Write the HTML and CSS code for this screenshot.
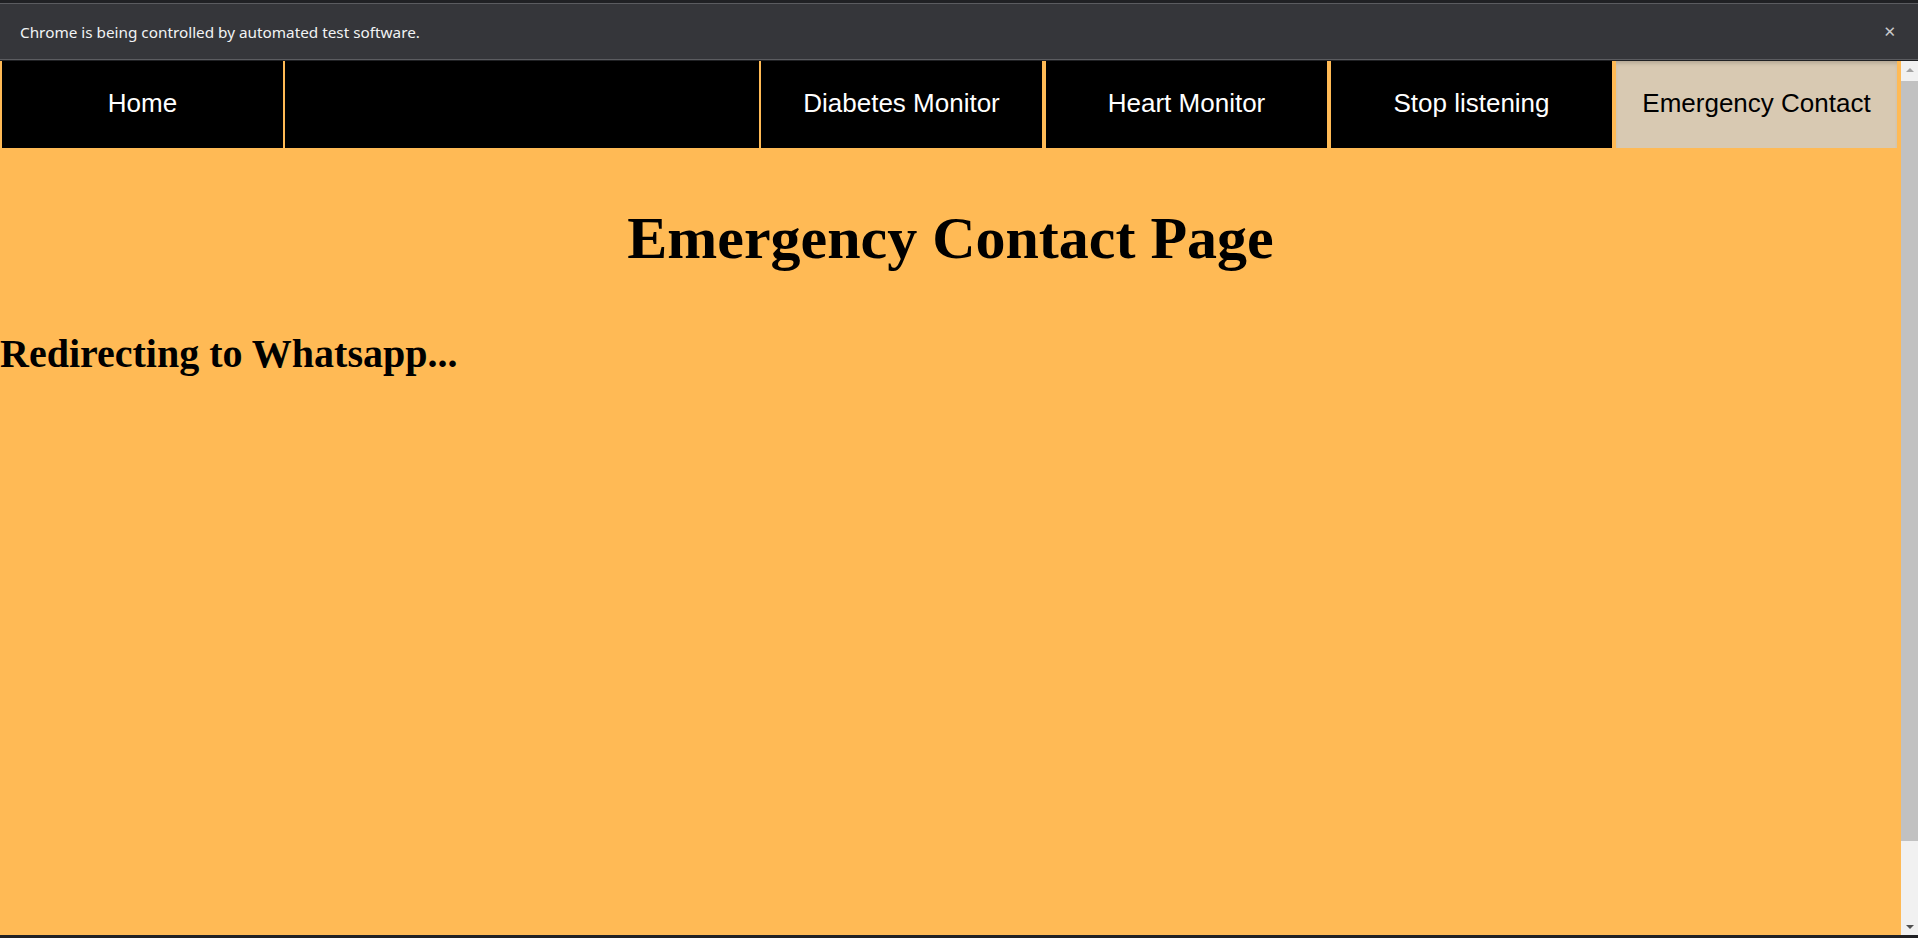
FILE: index.html
```html
<!DOCTYPE html>
<html lang="en">
<head>
<meta charset="utf-8">
<title>Emergency Contact Page</title>
<link rel="stylesheet" href="styles.css">
</head>
<body>
<div class="window">
  <div class="infobar">
    <span class="infobar-text">Chrome is being controlled by automated test software.</span>
    <span class="infobar-close">✕</span>
  </div>
  <div class="viewport">
    <div class="page">
      <nav class="nav">
        <a class="nav-item home">Home</a>
        <div class="nav-spacer"></div>
        <a class="nav-item first-right">Diabetes Monitor</a>
        <a class="nav-item">Heart Monitor</a>
        <a class="nav-item">Stop listening</a>
        <a class="nav-item active">Emergency Contact</a>
      </nav>
      <h1 class="title">Emergency Contact Page</h1>
      <h2 class="subtitle">Redirecting to Whatsapp...</h2>
    </div>
    <div class="scrollbar">
      <div class="sb-arrow sb-up"><span class="tri-up"></span></div>
      <div class="sb-track"><div class="sb-thumb"></div></div>
      <div class="sb-arrow sb-down"><span class="tri-down"></span></div>
    </div>
  </div>
  <div class="frame-bottom"></div>
</div>
</body>
</html>
```

FILE: styles.css
```css
html, body {
  margin: 0;
  padding: 0;
  height: 100%;
  overflow: hidden;
  background: #202124;
}

.window {
  display: flex;
  flex-direction: column;
  width: 1918px;
  height: 938px;
}

.infobar {
  height: 55px;
  margin-top: 3px;
  border-top: 1px solid #5b5c60;
  border-bottom: 1px solid #5b5c60;
  background: #35363a;
  display: flex;
  align-items: center;
  justify-content: space-between;
  padding: 0 22px 0 20px;
  box-sizing: content-box;
}

.infobar-text {
  font-family: "Noto Sans", "Open Sans", sans-serif;
  font-size: 15.3px;
  color: #f1f3f4;
}

.infobar-close {
  font-family: "DejaVu Sans", sans-serif;
  font-size: 15px;
  color: #c8c9cb;
  font-weight: bold;
}

.viewport {
  display: flex;
  height: 874px;
  margin-top: 1px;
}

.page {
  flex: 1;
  background: #ffba55;
  overflow: hidden;
}

.nav {
  display: flex;
  height: 87px;
  padding: 0 4px 0 2px;
  background: #ffba55;
}

.nav-item {
  width: 281px;
  flex: none;
  background: #000;
  color: #fff;
  font-family: "Liberation Sans", Arial, sans-serif;
  font-size: 26px;
  display: flex;
  align-items: center;
  justify-content: center;
  padding-bottom: 3px;
  box-sizing: border-box;
  margin-left: 4px;
}

.nav-item.home {
  margin-left: 0;
}

.nav-item.first-right {
  margin-left: 2px;
}

.nav-spacer {
  flex: 1;
  background: #000;
  margin-left: 2px;
}

.nav-item.active {
  background: #d8c9b2;
  color: #000;
  box-shadow: inset 0 4px 4px -2px rgba(0, 0, 0, 0.18);
}

.title {
  margin: 57px 0 0;
  font-family: "Liberation Serif", "Times New Roman", serif;
  font-weight: bold;
  font-size: 60px;
  line-height: 66px;
  text-align: center;
  color: #000;
}

.subtitle {
  margin: 61px 0 0;
  font-family: "Liberation Serif", "Times New Roman", serif;
  font-weight: bold;
  font-size: 40px;
  line-height: 44px;
  color: #000;
}

.scrollbar {
  width: 17px;
  flex: none;
  background: #f1f1f1;
  display: flex;
  flex-direction: column;
}

.sb-arrow {
  height: 17px;
  display: flex;
  align-items: center;
  justify-content: center;
}

.sb-track {
  flex: 1;
  padding: 3px 0 77px 0;
  display: flex;
  flex-direction: column;
}

.sb-thumb {
  flex: 1;
  background: #c1c1c1;
}

.tri-up {
  width: 0;
  height: 0;
  border-left: 4px solid transparent;
  border-right: 4px solid transparent;
  border-bottom: 4px solid #a3a3a3;
}

.tri-down {
  width: 0;
  height: 0;
  border-left: 4px solid transparent;
  border-right: 4px solid transparent;
  border-top: 4px solid #505050;
}

.frame-bottom {
  flex: 1;
  background: #202124;
}
```
